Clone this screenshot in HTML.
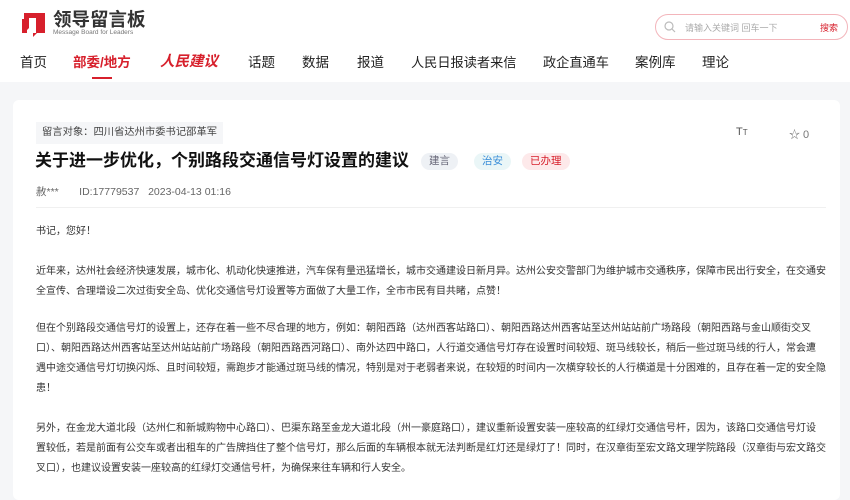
<!DOCTYPE html><html><head><meta charset="utf-8"><style>
*{margin:0;padding:0;box-sizing:border-box}
body{width:850px;height:495px;overflow:hidden;background:#f5f6f8;font-family:"Liberation Sans","Noto Sans CJK SC",sans-serif;color:#333;position:relative}
.hdr{position:absolute;left:0;top:0;width:850px;height:82px;background:#fff}
.abs{position:absolute;white-space:nowrap}
.nav span{position:absolute;top:55px;font-size:13.5px;line-height:16px;color:#222}
.card{position:absolute;left:13px;top:100px;width:827px;height:400px;background:#fff;border-radius:6px}
.p{position:absolute;left:36px;font-size:10px;color:#333;white-space:nowrap}
.tag{position:absolute;top:153px;height:17px;line-height:17px;font-size:10.5px;padding:0 8px;border-radius:9px}
</style></head><body>
<div class="hdr"></div>
<svg class="abs" style="left:20px;top:11px" width="27" height="26" viewBox="0 0 27 26"><path d="M4 2h21v20h-8l-4 4v-4h3V7H9v10l-5 5z" fill="#d7202c"/><path d="M2 8h5v14H2z" fill="#d7202c"/></svg>
<div class="abs" style="left:53px;top:10px;font-size:18.5px;line-height:20px;font-weight:bold;color:#333">领导留言板</div>
<div class="abs" style="left:53px;top:29px;font-size:6.5px;line-height:7px;color:#777">Message Board for Leaders</div>
<div class="abs" style="left:655px;top:14px;width:193px;height:26px;border:1px solid #f3b5bb;border-radius:13px"></div>
<svg class="abs" style="left:664px;top:21px" width="12" height="12" viewBox="0 0 12 12"><circle cx="5" cy="5" r="4" fill="none" stroke="#bbb" stroke-width="1.2"/><path d="M8 8l3 3" stroke="#bbb" stroke-width="1.2"/></svg>
<div class="abs" style="left:685px;top:21px;font-size:9px;color:#aaa">请输入关键词 回车一下</div>
<div class="abs" style="left:820px;top:21px;font-size:9px;color:#d7202c">搜索</div>
<div class="nav">
<span style="left:20px">首页</span>
<span style="left:73px;color:#d7202c;font-weight:bold">部委/地方</span>
<span style="left:160px;color:#d7202c;font-style:italic;font-weight:bold;font-size:14.5px;top:54px">人民建议</span>
<span style="left:248px">话题</span><span style="left:302px">数据</span><span style="left:357px">报道</span>
<span style="left:411px;font-size:13.2px">人民日报读者来信</span><span style="left:543px;font-size:13.2px">政企直通车</span><span style="left:635px">案例库</span><span style="left:702px">理论</span>
</div>
<div class="abs" style="left:92px;top:77px;width:20px;height:2px;background:#d7202c"></div>
<div class="card"></div>
<div class="abs" style="left:36px;top:122px;height:22px;line-height:22px;padding:0 6px;background:#f5f6f8;font-size:10.3px;color:#444">留言对象：四川省达州市委书记邵革军</div>
<div class="abs" style="left:736px;top:126px;font-size:11px;color:#555">T<span style="font-size:8px">T</span></div>
<div class="abs" style="left:789px;top:126px;font-size:11px;color:#777">☆ 0</div>
<div class="abs" style="left:35px;top:151px;font-size:17px;line-height:20px;font-weight:bold;color:#111">关于进一步优化，个别路段交通信号灯设置的建议</div>
<div class="tag" style="left:421px;background:#eef1f5;color:#667">建言</div>
<div class="tag" style="left:474px;background:#eaf6f7;color:#3a8ed8">治安</div>
<div class="tag" style="left:522px;background:#fde9ea;color:#d7202c">已办理</div>
<div class="abs" style="left:36px;top:184px;font-size:10.5px;color:#666">赦***&nbsp;&nbsp;&nbsp;&nbsp;&nbsp;&nbsp;&nbsp;ID:17779537&nbsp;&nbsp;&nbsp;2023-04-13 01:16</div>
<div class="abs" style="left:36px;top:207px;width:790px;height:1px;background:#f0f0f0"></div>
<div class="p" style="top:222px">书记，您好！</div>
<div class="p" style="top:262px">近年来，达州社会经济快速发展，城市化、机动化快速推进，汽车保有量迅猛增长，城市交通建设日新月异。达州公安交警部门为维护城市交通秩序，保障市民出行安全，在交通安</div>
<div class="p" style="top:282px">全宣传、合理增设二次过街安全岛、优化交通信号灯设置等方面做了大量工作，全市市民有目共睹，点赞！</div>
<div class="p" style="top:319px">但在个别路段交通信号灯的设置上，还存在着一些不尽合理的地方，例如：朝阳西路（达州西客站路口）、朝阳西路达州西客站至达州站站前广场路段（朝阳西路与金山顺街交叉</div>
<div class="p" style="top:339px">口）、朝阳西路达州西客站至达州站站前广场路段（朝阳西路西河路口）、南外达四中路口，人行道交通信号灯存在设置时间较短、斑马线较长，稍后一些过斑马线的行人，常会遭</div>
<div class="p" style="top:359px">遇中途交通信号灯切换闪烁、且时间较短，需跑步才能通过斑马线的情况，特别是对于老弱者来说，在较短的时间内一次横穿较长的人行横道是十分困难的，且存在着一定的安全隐</div>
<div class="p" style="top:379px">患！</div>
<div class="p" style="top:419px">另外，在金龙大道北段（达州仁和新城购物中心路口）、巴渠东路至金龙大道北段（州一豪庭路口），建议重新设置安装一座较高的红绿灯交通信号杆，因为，该路口交通信号灯设</div>
<div class="p" style="top:439px">置较低，若是前面有公交车或者出租车的广告牌挡住了整个信号灯，那么后面的车辆根本就无法判断是红灯还是绿灯了！同时，在汉章街至宏文路文理学院路段（汉章街与宏文路交</div>
<div class="p" style="top:459px">叉口），也建议设置安装一座较高的红绿灯交通信号杆，为确保来往车辆和行人安全。</div>
</body></html>
